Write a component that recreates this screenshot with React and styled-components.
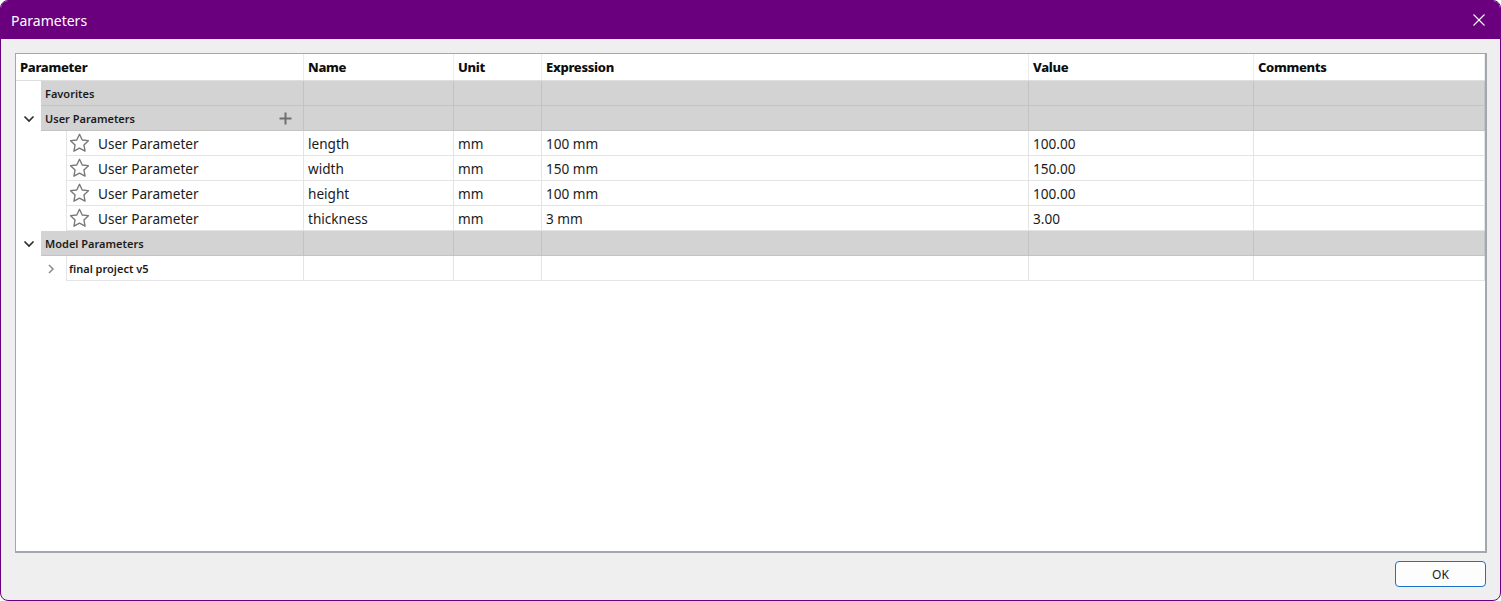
import React from 'react';
import styled, { createGlobalStyle } from 'styled-components';

const COLS = '288px 150px 88px 487px 225px 1fr';

const GlobalStyle = createGlobalStyle`
  html, body {
    margin: 0;
    padding: 0;
    background: #ffffff;
  }
  #root {
    width: 1501px;
    height: 601px;
  }
  * {
    box-sizing: border-box;
  }
`;

const Window = styled.div`
  width: 1501px;
  height: 601px;
  display: flex;
  flex-direction: column;
  border: 1px solid #6b007f;
  border-radius: 8px;
  overflow: hidden;
  background: #efefef;
  font-family: 'Noto Sans', 'Open Sans', sans-serif;
`;

const TitleBar = styled.div`
  height: 38px;
  flex: none;
  display: flex;
  align-items: center;
  justify-content: space-between;
  background: #6b007f;
  color: #ffffff;
  padding: 0 14px 0 10px;
  font-size: 14px;
`;

const CloseButton = styled.div`
  width: 14px;
  height: 14px;
  display: flex;
  align-items: center;
  justify-content: center;
`;

const Body = styled.div`
  flex: 1;
  display: flex;
  flex-direction: column;
  padding: 14px 13px 0 14px;
  min-height: 0;
`;

const Panel = styled.div`
  flex: 1;
  background: #ffffff;
  border: 1px solid #a3a7ae;
  border-right-width: 2px;
  border-bottom-width: 2px;
  overflow: hidden;
`;

const HeaderRow = styled.div`
  display: grid;
  grid-template-columns: ${COLS};
  height: 27px;
  border-bottom: 1px solid #dedede;
`;

const HeaderCell = styled.div`
  display: flex;
  align-items: center;
  padding-left: 4px;
  font-size: 13px;
  font-weight: 800;
  color: #0d0d0d;
  letter-spacing: -0.3px;
  border-right: 1px solid #ececec;
`;

const Row = styled.div`
  display: grid;
  grid-template-columns: ${COLS};
  height: 25px;
`;

const TreeCell = styled.div`
  display: flex;
  min-width: 0;
`;

const Indent = styled.div`
  width: ${({ $w }) => $w}px;
  flex: none;
  display: flex;
  align-items: center;
  justify-content: ${({ $align }) => $align || 'center'};
  padding-right: ${({ $pr }) => $pr || 0}px;
`;

const CellBox = styled.div`
  flex: 1;
  min-width: 0;
  display: flex;
  align-items: center;
  gap: 9px;
  padding-left: ${({ $pl }) => ($pl !== undefined ? $pl : 4)}px;
  background: ${({ $group }) => ($group ? '#d3d3d3' : '#ffffff')};
  border-bottom: 1px solid ${({ $group }) => ($group ? '#c3c3c3' : '#e4e4e4')};
  border-right: 1px solid ${({ $group }) => ($group ? '#c3c3c3' : '#e4e4e4')};
  border-left: ${({ $edge }) => ($edge ? '1px solid #e4e4e4' : 'none')};
  font-size: ${({ $small }) => ($small ? '11px' : '13.6px')};
  font-weight: ${({ $small }) => ($small ? 600 : 400)};
  color: #1b1b1b;
  white-space: nowrap;
`;

const Label = styled.span`
  flex: 1;
`;

const Footer = styled.div`
  flex: none;
  display: flex;
  justify-content: flex-end;
  padding: 8px 1px 13px 0;
`;

const OkButton = styled.button`
  width: 91px;
  height: 26px;
  border: 1px solid #1a73c9;
  border-radius: 4px;
  background: #fdfdfd;
  font-family: 'Noto Sans', sans-serif;
  font-size: 12px;
  color: #1b1b1b;
  padding: 0;
`;

const Chevron = ({ down }) => (
  <svg width="12" height="12" viewBox="0 0 12 12">
    {down ? (
      <path d="M1.5 3.5 L6 8 L10.5 3.5" fill="none" stroke="#2e2e2e" strokeWidth="1.7" />
    ) : (
      <path d="M4 2 L8 6 L4 10" fill="none" stroke="#8a8a8a" strokeWidth="1.5" />
    )}
  </svg>
);

const Star = () => (
  <svg width="21" height="20" viewBox="0 0 20 19">
    <path
      d="M10 1.2 L12.6 6.6 L18.5 7.3 L14.2 11.4 L15.3 17.3 L10 14.4 L4.7 17.3 L5.8 11.4 L1.5 7.3 L7.4 6.6 Z"
      fill="none"
      stroke="#787878"
      strokeWidth="1.3"
      strokeLinejoin="round"
    />
  </svg>
);

const Plus = () => (
  <svg width="13" height="13" viewBox="0 0 13 13">
    <path d="M6.5 0.5 V12.5 M0.5 6.5 H12.5" stroke="#6f6f6f" strokeWidth="2" />
  </svg>
);

const columns = ['Parameter', 'Name', 'Unit', 'Expression', 'Value', 'Comments'];

const userParams = [
  { name: 'length', unit: 'mm', expr: '100 mm', value: '100.00' },
  { name: 'width', unit: 'mm', expr: '150 mm', value: '150.00' },
  { name: 'height', unit: 'mm', expr: '100 mm', value: '100.00' },
  { name: 'thickness', unit: 'mm', expr: '3 mm', value: '3.00' },
];

const EmptyCells = ({ group, count = 5 }) =>
  Array.from({ length: count }).map((_, i) => <CellBox key={i} $group={group} />);

const GroupRow = ({ label, expandable, plus }) => (
  <Row>
    <TreeCell>
      <Indent $w={25}>{expandable && <Chevron down />}</Indent>
      <CellBox $group $small>
        <Label>{label}</Label>
        {plus && (
          <Indent $w={24} $align="flex-start">
            <Plus />
          </Indent>
        )}
      </CellBox>
    </TreeCell>
    <EmptyCells group />
  </Row>
);

const ParamRow = ({ p }) => (
  <Row>
    <TreeCell>
      <Indent $w={50} />
      <CellBox $edge $pl={2} style={{ gap: 8 }}>
        <Star />
        User Parameter
      </CellBox>
    </TreeCell>
    <CellBox>{p.name}</CellBox>
    <CellBox>{p.unit}</CellBox>
    <CellBox>{p.expr}</CellBox>
    <CellBox>{p.value}</CellBox>
    <CellBox />
  </Row>
);

const App = () => (
  <>
    <GlobalStyle />
    <Window>
      <TitleBar>
        <span>Parameters</span>
        <CloseButton>
          <svg width="12" height="12" viewBox="0 0 12 12">
            <path d="M0.5 0.5 L11.5 11.5 M11.5 0.5 L0.5 11.5" stroke="#ffffff" strokeWidth="1.1" />
          </svg>
        </CloseButton>
      </TitleBar>
      <Body>
        <Panel>
          <HeaderRow>
            {columns.map((c) => (
              <HeaderCell key={c}>{c}</HeaderCell>
            ))}
          </HeaderRow>
          <GroupRow label="Favorites" />
          <GroupRow label="User Parameters" expandable plus />
          {userParams.map((p) => (
            <ParamRow key={p.name} p={p} />
          ))}
          <GroupRow label="Model Parameters" expandable />
          <Row>
            <TreeCell>
              <Indent $w={50} $align="flex-end" $pr={9}>
                <Chevron />
              </Indent>
              <CellBox $edge $small $pl={2}>
                final project v5
              </CellBox>
            </TreeCell>
            <EmptyCells />
          </Row>
        </Panel>
        <Footer>
          <OkButton>OK</OkButton>
        </Footer>
      </Body>
    </Window>
  </>
);

export default App;
